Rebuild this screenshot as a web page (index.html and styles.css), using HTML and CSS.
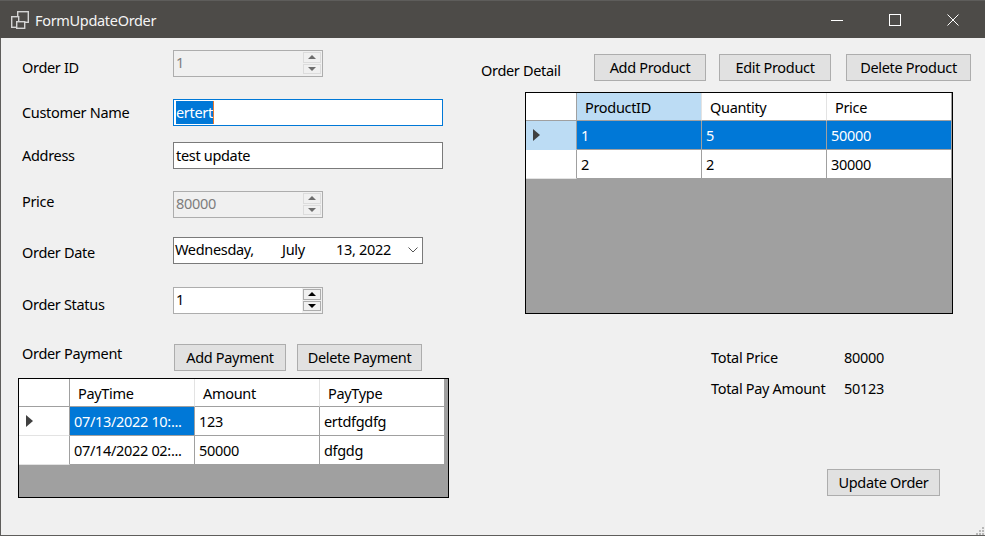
FILE: index.html
```html
<!DOCTYPE html>
<html lang="en">
<head>
  <meta charset="UTF-8">
  <title>FormUpdateOrder</title>
  <link rel="stylesheet" href="styles.css">
</head>
<body>
  <div class="window">

    <!-- Title bar -->
    <header class="titlebar">
      <svg class="app-icon" width="18" height="18" viewBox="0 0 18 18" fill="none" stroke="#d4d4d4" stroke-width="1.4">
        <rect x="6.7" y="0.7" width="10.6" height="10.6"/>
        <rect x="0.7" y="5.7" width="7" height="10.6" fill="#4d4b48"/>
        <rect x="5.7" y="10.7" width="8" height="6.6" fill="#4d4b48"/>
      </svg>
      <span class="title">FormUpdateOrder</span>
      <div class="win-buttons">
        <span class="win-btn"><svg width="12" height="12" viewBox="0 0 12 12" stroke="#fff" fill="none"><path d="M0 6.5h12"/></svg></span>
        <span class="win-btn"><svg width="12" height="12" viewBox="0 0 12 12" stroke="#fff" fill="none"><rect x="0.5" y="0.5" width="11" height="11"/></svg></span>
        <span class="win-btn"><svg width="12" height="12" viewBox="0 0 12 12" stroke="#fff" fill="none"><path d="M0.5 0.5l11 11M11.5 0.5l-11 11"/></svg></span>
      </div>
    </header>

    <main class="form">

      <!-- Left side: order fields and payments -->
      <section class="left">
        <div class="row row-id">
          <label class="label">Order ID</label>
          <div class="spin disabled">
            <span class="spin-value">1</span>
            <div class="spin-btns"><span class="spin-btn up"></span><span class="spin-btn down"></span></div>
          </div>
        </div>
        <div class="row row-customer">
          <label class="label">Customer Name</label>
          <div class="input focused"><span class="selected">ertert</span></div>
        </div>
        <div class="row row-address">
          <label class="label">Address</label>
          <div class="input">test update</div>
        </div>
        <div class="row row-price">
          <label class="label">Price</label>
          <div class="spin disabled">
            <span class="spin-value">80000</span>
            <div class="spin-btns"><span class="spin-btn up"></span><span class="spin-btn down"></span></div>
          </div>
        </div>
        <div class="row row-date">
          <label class="label">Order Date</label>
          <div class="date">
            <span class="date-day">Wednesday,</span>
            <span class="date-month">July</span>
            <span class="date-rest">13, 2022</span>
            <svg class="chevron" width="10" height="6" viewBox="0 0 10 6" fill="none" stroke="#555"><path d="M0.5 0.5L5 5L9.5 0.5"/></svg>
          </div>
        </div>
        <div class="row row-status">
          <label class="label">Order Status</label>
          <div class="spin">
            <span class="spin-value">1</span>
            <div class="spin-btns"><span class="spin-btn up"></span><span class="spin-btn down"></span></div>
          </div>
        </div>
        <div class="row row-payment">
          <label class="label">Order Payment</label>
          <div class="btn-group">
            <button class="btn btn-add-pay">Add Payment</button>
            <button class="btn btn-del-pay">Delete Payment</button>
          </div>
        </div>
        <div class="grid grid-payment">
          <table>
            <tr class="head">
              <th class="corner"></th><th>PayTime</th><th>Amount</th><th>PayType</th>
            </tr>
            <tr>
              <td class="rowhead"><span class="arrow"></span></td><td class="current">07/13/2022 10:...</td><td>123</td><td>ertdfgdfg</td>
            </tr>
            <tr>
              <td class="rowhead"></td><td>07/14/2022 02:...</td><td>50000</td><td>dfgdg</td>
            </tr>
          </table>
        </div>
      </section>

      <!-- Right side: products and totals -->
      <section class="right">
        <div class="detail-top">
          <label class="label detail-label">Order Detail</label>
          <button class="btn btn-add-prod">Add Product</button>
          <button class="btn btn-edit-prod">Edit Product</button>
          <button class="btn btn-del-prod">Delete Product</button>
        </div>
        <div class="grid grid-detail">
          <table>
            <tr class="head">
              <th class="corner"></th><th class="active">ProductID</th><th>Quantity</th><th>Price</th>
            </tr>
            <tr>
              <td class="rowhead active"><span class="arrow"></span></td><td class="current">1</td><td class="current">5</td><td class="current">50000</td>
            </tr>
            <tr>
              <td class="rowhead"></td><td>2</td><td>2</td><td>30000</td>
            </tr>
          </table>
        </div>
        <div class="totals">
          <div class="total-row"><span class="total-name">Total Price</span><span>80000</span></div>
          <div class="total-row"><span class="total-name">Total Pay Amount</span><span>50123</span></div>
        </div>
        <div class="actions">
          <button class="btn btn-update">Update Order</button>
        </div>
      </section>

    </main>

    <svg class="grip" width="8" height="8" viewBox="0 0 8 8" fill="#b8b8b8">
      <rect x="6" y="0" width="2" height="2"/><rect x="3" y="3" width="2" height="2"/><rect x="6" y="3" width="2" height="2"/>
      <rect x="0" y="6" width="2" height="2"/><rect x="3" y="6" width="2" height="2"/><rect x="6" y="6" width="2" height="2"/>
    </svg>
  </div>
</body>
</html>
```

FILE: styles.css
```css
* {
  margin: 0;
  padding: 0;
  box-sizing: border-box;
}

body {
  font-family: 'Noto Sans', sans-serif;
  font-size: 14.5px;
  letter-spacing: -0.32px;
  color: #000;
  background: #f0f0f0;
  overflow: hidden;
}

.window {
  position: relative;
  width: 985px;
  height: 536px;
  display: flex;
  flex-direction: column;
  background: #f0f0f0;
  border-left: 1px solid #5e5d5b;
  border-bottom: 1px solid #5e5d5b;
}

/* title bar */
.titlebar {
  height: 38px;
  flex: none;
  display: flex;
  align-items: center;
  margin-left: -1px;
  padding-left: 11px;
  background: #4d4b48;
  border-top: 1px solid #5e5d5b;
  color: #f4f4f4;
}

.app-icon {
  margin-right: 6px;
}

.win-buttons {
  display: flex;
  margin-left: auto;
  padding-right: 3px;
}

.win-btn {
  width: 58px;
  height: 37px;
  display: flex;
  align-items: center;
  justify-content: center;
}

/* body of the form */
.form {
  flex: 1;
  display: flex;
}

.left {
  width: 480px;
  flex: none;
  padding: 12px 0 0 21px;
}

.right {
  flex: 1;
}

.row {
  display: flex;
  align-items: flex-start;
  height: 27px;
}

.label {
  width: 151px;
  flex: none;
  line-height: 27px;
  white-space: nowrap;
}

.row-id .label { margin-top: 4px; }
.row-customer { margin-top: 22px; }
.row-address { margin-top: 16px; }
.row-price { margin-top: 22px; }
.row-price .label { margin-top: -3px; }
.row-date { margin-top: 19px; }
.row-date .label { margin-top: 2px; }
.row-status { margin-top: 23px; }
.row-status .label { margin-top: 4px; }
.row-payment { margin-top: 30px; }
.row-payment .label { margin-top: -4px; }

/* inputs */
.input {
  width: 270px;
  height: 27px;
  padding-left: 2px;
  line-height: 25px;
  background: #fff;
  border: 1px solid #7a7a7a;
}

.input.focused {
  border-color: #0078d7;
}

.selected {
  display: inline-block;
  height: 23px;
  margin-top: 1px;
  line-height: 23px;
  vertical-align: top;
  background: #0078d7;
  color: #fff;
  border-right: 1px solid #e8772e;
}

.spin {
  width: 150px;
  height: 27px;
  display: flex;
  justify-content: space-between;
  background: #fff;
  border: 1px solid #adadad;
}

.spin-value {
  padding-left: 2px;
  line-height: 23px;
}

.spin.disabled {
  background: #f0f0f0;
  color: #7d7d7d;
}

.spin-btns {
  width: 20px;
  display: flex;
  flex-direction: column;
  gap: 1px;
  padding: 1px 1px 2px 1px;
  background: #f0f0f0;
}

.spin-btn {
  flex: 1;
  display: flex;
  align-items: center;
  justify-content: center;
  background: #f0f0f0;
  border: 1px solid #adadad;
}

.spin.disabled .spin-btn {
  border-color: #dcdcdc;
}

.spin-btn::after {
  content: "";
  border-left: 4px solid transparent;
  border-right: 4px solid transparent;
}

.spin-btn.up::after { border-bottom: 4px solid #000; }
.spin-btn.down::after { border-top: 4px solid #000; }
.spin.disabled .spin-btn.up::after { border-bottom-color: #6d6d6d; }
.spin.disabled .spin-btn.down::after { border-top-color: #6d6d6d; }

.date {
  width: 250px;
  height: 27px;
  display: flex;
  align-items: center;
  padding-left: 1px;
  background: #fff;
  border: 1px solid #7a7a7a;
}

.date span {
  margin-top: -3px;
}

.date-day { width: 107px; }
.date-month { width: 54px; }
.date-rest { width: 72px; }

.chevron {
  margin-top: -2px;
}

/* buttons */
.btn {
  height: 27px;
  padding-bottom: 2px;
  font: inherit;
  letter-spacing: inherit;
  color: #000;
  background: #e1e1e1;
  border: 1px solid #adadad;
}

.btn-group {
  display: flex;
  margin-left: 1px;
}

.btn-add-pay { width: 112px; margin-right: 11px; }
.btn-del-pay { width: 125px; }
.btn-add-prod { width: 112px; margin-right: 13px; }
.btn-edit-prod { width: 112px; margin-right: 15px; }
.btn-del-prod { width: 125px; }

/* data grids */
.grid {
  background: #a0a0a0;
  border: 1px solid #000;
}

.grid-payment {
  width: 431px;
  height: 120px;
  margin: 7px 0 0 -4px;
}

.grid-detail {
  width: 428px;
  height: 222px;
  margin: 11px 0 0 44px;
}

table {
  border-collapse: separate;
  border-spacing: 0;
  table-layout: fixed;
  width: 426px;
}

th, td {
  width: 125px;
  height: 29px;
  padding: 0 4px;
  font-weight: normal;
  text-align: left;
  white-space: nowrap;
  overflow: hidden;
  background: #fff;
  border-right: 1px solid #a0a0a0;
  border-bottom: 1px solid #a0a0a0;
}

th {
  height: 28px;
  padding-left: 8px;
  border-right-color: #e3e3e3;
}

th:last-child {
  border-right-color: #a0a0a0;
}

th.corner, td.rowhead {
  width: 51px;
  padding: 0;
  border-right-color: #a0a0a0;
}

td.rowhead {
  border-bottom-color: #e3e3e3;
}

.rowhead .arrow {
  display: block;
  width: 0;
  height: 0;
  margin-left: 7px;
  border-left: 7px solid #404040;
  border-top: 6px solid transparent;
  border-bottom: 6px solid transparent;
}

.current {
  background: #0078d7;
  color: #fff;
}

.active {
  background: #bcdcf4;
}

td.rowhead.active {
  border-bottom-color: #bcdcf4;
}

/* right side extras */
.detail-top {
  display: flex;
  align-items: flex-start;
  height: 27px;
  margin-top: 16px;
}

.detail-label {
  width: 113px;
  margin-top: 3px;
}

.totals {
  margin: 28px 0 0 230px;
}

.total-row {
  display: flex;
  height: 31px;
  line-height: 31px;
}

.total-name {
  width: 133px;
}

.actions {
  margin: 65px 0 0 346px;
}

.btn-update {
  width: 113px;
}

.grip {
  position: absolute;
  right: 1px;
  bottom: 0;
}
```
